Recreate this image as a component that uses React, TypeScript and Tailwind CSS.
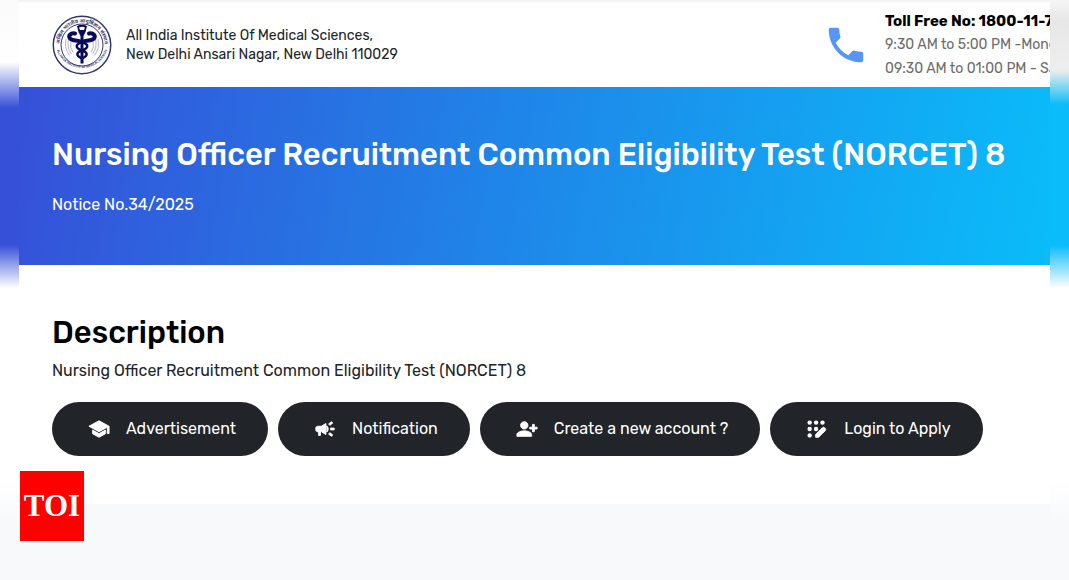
import type { ComponentType } from "react";
import { MdCampaign, MdPersonAddAlt1, MdPhone, MdSchool } from "react-icons/md";

const LoginIcon = ({ className }: { className?: string }) => (
  <svg viewBox="0 0 24 24" fill="currentColor" className={className} aria-hidden="true">
    <circle cx="4" cy="5" r="2.4" />
    <circle cx="11" cy="5" r="2.4" />
    <circle cx="18" cy="5" r="2.4" />
    <circle cx="4" cy="12" r="2.4" />
    <circle cx="11" cy="12" r="2.4" />
    <circle cx="4" cy="19" r="2.4" />
    <path d="M10.5 21v-3l7.4-7.4q1.2-1 2.4 0l.8.8q1 1.2 0 2.4L13.7 21z" />
  </svg>
);

const actions: { label: string; icon: ComponentType<{ className?: string }> }[] = [
  { label: "Advertisement", icon: MdSchool },
  { label: "Notification", icon: MdCampaign },
  { label: "Create a new account ?", icon: MdPersonAddAlt1 },
  { label: "Login to Apply", icon: LoginIcon },
];

const Seal = () => (
  <svg viewBox="0 0 120 120" className="size-[60px] shrink-0" role="img" aria-label="AIIMS seal">
    <defs>
      <path id="seal-top" d="M 15 60 A 45 45 0 1 1 105 60" />
      <path id="seal-bottom" d="M 7 53 A 53 53 0 1 0 113 53" />
    </defs>
    <g fill="none" stroke="#35356f">
      <circle cx="60" cy="60" r="57.5" strokeWidth="3" />
      <circle cx="60" cy="60" r="42" strokeWidth="2" />
      <g strokeWidth="1.5" opacity="0.5">
        <path d="M28 48q-4 18 7 33M33 49q-4 16 6 29M38 52q-3 13 4 23" />
        <path d="M92 48q4 18-7 33M87 49q4 16-6 29M82 52q3 13-4 23" />
      </g>
    </g>
    <g fill="#35356f" fontFamily="Noto Sans, Liberation Sans, sans-serif" fontWeight="700">
      <text fontSize="10" textAnchor="middle">
        <textPath href="#seal-top" startOffset="50%">अखिल भारतीय आयुर्विज्ञान संस्थान</textPath>
      </text>
      <text fontSize="6" textAnchor="middle">
        <textPath href="#seal-bottom" startOffset="50%">ALL INDIA INSTITUTE OF MEDICAL SCIENCES</textPath>
      </text>
    </g>
    {/* winged staff */}
    <path fill="#0a0a5c" d="M50 22q10-5 20 0l-3 12-4 8v55h-6V42l-4-8z" />
    <path fill="#fff" d="M54 25q6-3 12 0l-2 5h-8z" />
    <g fill="none" stroke="#0a0a5c" strokeLinecap="round">
      <path strokeWidth="8" d="M46 37c-9-2-14 5-10 10 5 6 15 2 24 7M74 37c9-2 14 5 10 10-5 6-15 2-24 7" />
      <path strokeWidth="5" d="M60 54c-14 5-14 12 0 17s10 11 2 15M60 54c14 5 14 12 0 17s-10 11-2 15" />
    </g>
  </svg>
);

const Header = () => (
  <header className="flex h-[87px] items-center border-t-2 border-gray-100 bg-white pl-[33px]">
    <Seal />
    <p className="ml-[14px] text-[14px] leading-[19px] text-[#212529]">
      All India Institute Of Medical Sciences,
      <br />
      New Delhi Ansari Nagar, New Delhi 110029
    </p>
    <MdPhone className="ml-auto size-[46px] shrink-0 text-[#5596f7]" />
    <div className="ml-[16px] w-[165px] shrink-0 overflow-hidden text-[14px] leading-6 whitespace-nowrap text-[#6c6c6c]">
      <p className="text-[15px] font-bold text-black">Toll Free No: 1800-11-7</p>
      <p>9:30 AM to 5:00 PM -Mond</p>
      <p>09:30 AM to 01:00 PM - Sa</p>
    </div>
  </header>
);

const Banner = () => (
  <section className="h-[178px] bg-[linear-gradient(100deg,#3650d8,#1e88e9_50%,#0abcf9)] px-[33px] pt-12 text-white">
    <h1 className="text-[31px] leading-10 font-medium whitespace-nowrap">
      Nursing Officer Recruitment Common Eligibility Test (NORCET) 8
    </h1>
    <p className="mt-[18px] text-[16px] leading-6">Notice No.34/2025</p>
  </section>
);

const Description = () => (
  <section className="bg-white px-[33px] pt-12 pb-12">
    <h2 className="text-[31px] leading-10 font-medium text-black">Description</h2>
    <p className="mt-[6px] text-[16px] leading-6 text-[#212529]">
      Nursing Officer Recruitment Common Eligibility Test (NORCET) 8
    </p>
    <div className="mt-[19px] flex flex-wrap gap-[10px]">
      {actions.map(({ label, icon: Icon }) => (
        <button
          key={label}
          type="button"
          className="flex h-[54px] items-center gap-4 rounded-full bg-[#212529] pr-8 pl-9 text-[16px] text-white"
        >
          <Icon className="size-[22px] [&_path:not([fill=none])]:stroke-current [&_path:not([fill=none])]:stroke-1" />
          {label}
        </button>
      ))}
    </div>
  </section>
);

const App = () => {
  return (
    <div className="relative flex min-h-screen overflow-hidden bg-[#f8f9fb] font-['Rubik','Roboto',sans-serif]">
      <div className="w-[19px] shrink-0 bg-[linear-gradient(to_bottom,#fafafa_0,#ffffff_62px,#3650d8_108px,#3650d8_245px,#ffffff_288px,#ffffff_480px,#f8f9fb_525px)]" />
      <main className="min-w-0 flex-1">
        <Header />
        <Banner />
        <Description />
      </main>
      <div className="w-[19px] shrink-0 bg-[linear-gradient(to_bottom,#f5f5f5_0,#e7e7e7_20px,#eeeeee_70px,#0abcf9_105px,#0abcf9_245px,#ffffff_288px,#ffffff_480px,#f8f9fb_525px)]" />
      <div className="absolute top-[471px] left-[20px] flex h-[70px] w-16 items-center justify-center bg-[#ff0000] font-['Liberation_Serif',serif] text-[31px] font-bold text-white">
        TOI
      </div>
    </div>
  );
};

export default App;
